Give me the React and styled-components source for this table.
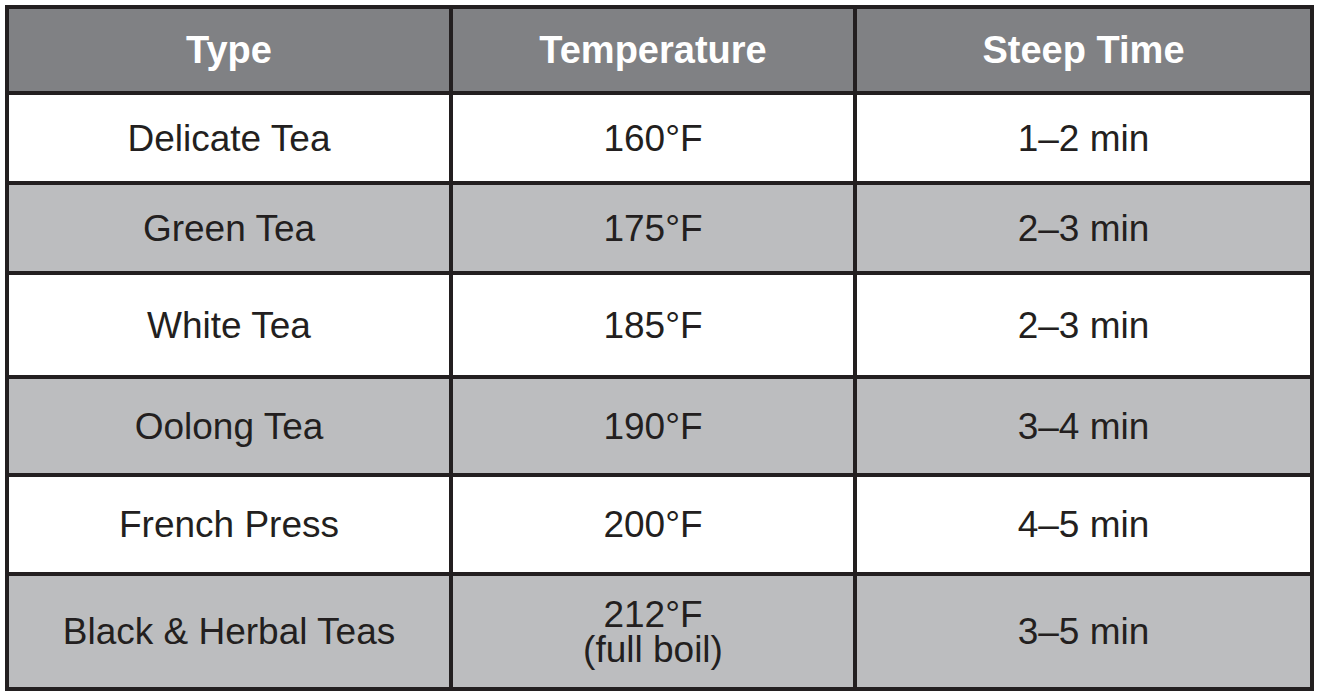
import React from "react";
import styled, { createGlobalStyle } from "styled-components";

const GlobalStyle = createGlobalStyle`
  html, body {
    margin: 0;
    padding: 0;
    background: #ffffff;
  }
  body {
    padding: 5px;
    font-family: "Liberation Sans", Arial, Helvetica, sans-serif;
  }
`;

const Table = styled.table`
  width: 1309px;
  border-collapse: separate;
  border-spacing: 4px;
  background: #231f20;
  table-layout: fixed;
  text-align: center;
`;

const Th = styled.th`
  height: 82px;
  padding: 0;
  background: #808184;
  color: #ffffff;
  font-size: 38px;
  font-weight: 700;
  vertical-align: middle;
`;

const Td = styled.td`
  height: ${(p) => p.$h}px;
  padding: 0;
  background: ${(p) => (p.$shaded ? "#bcbdbf" : "#ffffff")};
  color: #231f20;
  font-size: 37px;
  line-height: 37px;
  vertical-align: middle;
`;

const Line = styled.span`
  display: block;
  line-height: 35px;
`;

const rows = [
  { type: "Delicate Tea", temp: ["160°F"], time: "1–2 min", h: 86 },
  { type: "Green Tea", temp: ["175°F"], time: "2–3 min", h: 86 },
  { type: "White Tea", temp: ["185°F"], time: "2–3 min", h: 100 },
  { type: "Oolong Tea", temp: ["190°F"], time: "3–4 min", h: 94 },
  { type: "French Press", temp: ["200°F"], time: "4–5 min", h: 95 },
  { type: "Black & Herbal Teas", temp: ["212°F", "(full boil)"], time: "3–5 min", h: 111 },
];

export default function App() {
  return (
    <>
      <GlobalStyle />
      <Table>
        <colgroup>
          <col style={{ width: 440 }} />
          <col style={{ width: 400 }} />
          <col style={{ width: 453 }} />
        </colgroup>
        <thead>
          <tr>
            <Th>Type</Th>
            <Th>Temperature</Th>
            <Th>Steep Time</Th>
          </tr>
        </thead>
        <tbody>
          {rows.map((r, i) => (
            <tr key={r.type}>
              <Td $h={r.h} $shaded={i % 2 === 1}>{r.type}</Td>
              <Td $h={r.h} $shaded={i % 2 === 1}>
                {r.temp.map((t) => (
                  <Line key={t}>{t}</Line>
                ))}
              </Td>
              <Td $h={r.h} $shaded={i % 2 === 1}>{r.time}</Td>
            </tr>
          ))}
        </tbody>
      </Table>
    </>
  );
}
